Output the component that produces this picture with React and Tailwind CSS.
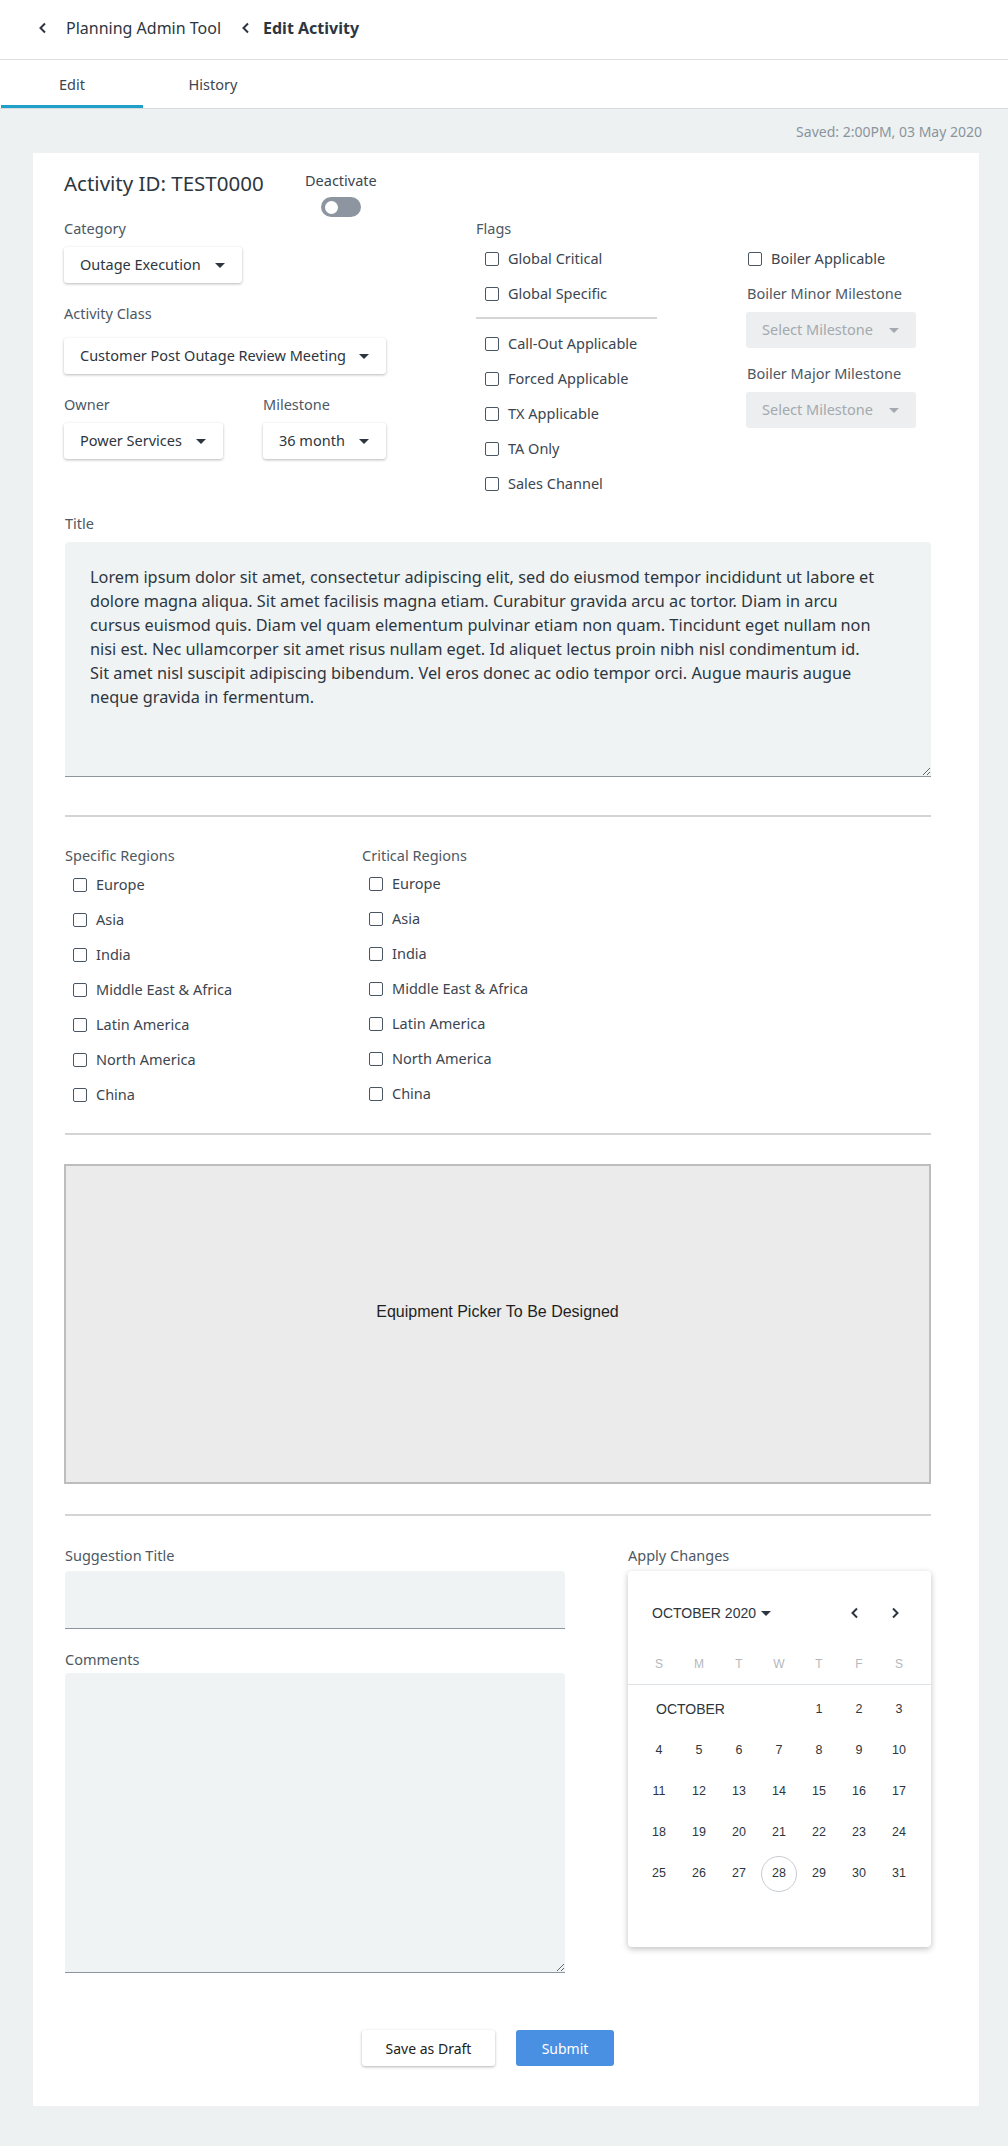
import React from 'react';

const font = { fontFamily: '"Noto Sans", "Open Sans", sans-serif' };

const Caret = ({ className = 'border-t-[#2d3640]' }) => (
  <span className={`inline-block w-0 h-0 border-l-[5px] border-r-[5px] border-t-[5px] border-l-transparent border-r-transparent ${className}`} />
);

const Chevron = ({ dir = 'left', className = '' }) => (
  <svg width="10" height="12" viewBox="0 0 10 12" className={className}>
    {dir === 'left' ? (
      <path d="M7 1.5 L2.5 6 L7 10.5" fill="none" stroke="#2d3640" strokeWidth="2" />
    ) : (
      <path d="M3 1.5 L7.5 6 L3 10.5" fill="none" stroke="#2d3640" strokeWidth="2" />
    )}
  </svg>
);

const Select = ({ value, width }) => (
  <div className={`${width} h-[36px] bg-white rounded-[3px] shadow-[0_1px_3px_rgba(0,0,0,0.28)] flex items-center justify-between pl-4 pr-[17px]`}>
    <span className="text-[14.5px] text-[#2d3640] whitespace-nowrap">{value}</span>
    <Caret />
  </div>
);

const DisabledSelect = () => (
  <div className="w-[170px] h-[36px] bg-[#eceeef] rounded-[3px] flex items-center justify-between pl-4 pr-[17px]">
    <span className="text-[14.5px] text-[#a3a9ae]">Select Milestone</span>
    <Caret className="border-t-[#a3a9ae]" />
  </div>
);

const Checkbox = ({ label }) => (
  <div className="h-[35px] flex items-center gap-[9px]">
    <span className="w-[14px] h-[14px] border-[1.5px] border-[#4b5663] rounded-[2px] bg-white" />
    <span className="text-[14.5px] text-[#3b4550]">{label}</span>
  </div>
);

const Label = ({ children, className = '' }) => (
  <div className={`text-[14.5px] leading-[20px] text-[#4d5863] ${className}`}>{children}</div>
);

const regions = ['Europe', 'Asia', 'India', 'Middle East & Africa', 'Latin America', 'North America', 'China'];

const lorem =
  'Lorem ipsum dolor sit amet, consectetur adipiscing elit, sed do eiusmod tempor incididunt ut labore et dolore magna aliqua. Sit amet facilisis magna etiam. Curabitur gravida arcu ac tortor. Diam in arcu cursus euismod quis. Diam vel quam elementum pulvinar etiam non quam. Tincidunt eget nullam non nisi est. Nec ullamcorper sit amet risus nullam eget. Id aliquet lectus proin nibh nisl condimentum id. Sit amet nisl suscipit adipiscing bibendum. Vel eros donec ac odio tempor orci. Augue mauris augue neque gravida in fermentum.';

const Calendar = () => {
  const weeks = [
    [null, null, null, null, 1, 2, 3],
    [4, 5, 6, 7, 8, 9, 10],
    [11, 12, 13, 14, 15, 16, 17],
    [18, 19, 20, 21, 22, 23, 24],
    [25, 26, 27, 28, 29, 30, 31],
  ];
  return (
    <div
      className="w-[303px] h-[376px] bg-white rounded-[4px] shadow-[0_2px_6px_rgba(0,0,0,0.25)]"
      style={{ fontFamily: '"Liberation Sans", Arial, sans-serif' }}
    >
      <div className="h-[84px] flex items-center pl-[24px] pr-[31px]">
        <span className="text-[14px] text-[#2d3640]">OCTOBER 2020</span>
        <Caret className="border-t-[#2d3640] ml-[5px]" />
        <div className="flex-1" />
        <Chevron dir="left" className="mr-[30px]" />
        <Chevron dir="right" />
      </div>
      <div className="grid grid-cols-7 w-[280px] ml-[11px] h-[29px] items-start">
        {['S', 'M', 'T', 'W', 'T', 'F', 'S'].map((d, i) => (
          <div key={i} className="text-center text-[12px] leading-[18px] text-[#b3b8bd]">{d}</div>
        ))}
      </div>
      <div className="h-px bg-[#dde2e6]" />
      <div className="ml-[11px] w-[280px] mt-[4px]">
        {weeks.map((w, wi) => (
          <div key={wi} className="grid grid-cols-7 h-[41px] items-center">
            {wi === 0 && (
              <div className="col-span-4 text-[14px] text-[#2d3640] pl-[17px]">OCTOBER</div>
            )}
            {w.map((d, di) =>
              d === null ? null : (
                <div key={di} className="flex justify-center">
                  <span
                    className={`w-[36px] h-[36px] flex items-center justify-center text-[12.5px] text-[#2d3640] rounded-full ${
                      d === 28 ? 'border border-[#c8ccd0]' : ''
                    }`}
                  >
                    {d}
                  </span>
                </div>
              )
            )}
          </div>
        ))}
      </div>
    </div>
  );
};

export default function App() {
  return (
    <div className="w-[1008px] min-h-[2146px] bg-[#edf1f2] text-[#2d3640]" style={font}>
      {/* header */}
      <div className="h-[60px] bg-white border-b-[1.5px] border-[#dcdfe2] flex items-center pl-[38px] pb-[4px]">
        <Chevron dir="left" />
        <span className="ml-[18px] text-[16px] text-[#2d3640]">Planning Admin Tool</span>
        <Chevron dir="left" className="ml-[20px]" />
        <span className="ml-[12px] text-[16px] font-bold text-[#2d3640]">Edit Activity</span>
      </div>
      {/* tabs */}
      <div className="h-[49px] bg-white border-b border-[#d9dcdf] flex">
        <div className="w-[142px] ml-[1px] flex items-center justify-center text-[14.5px] text-[#3b4550] border-b-[3px] border-[#1fa0c8] pt-[4px]">
          Edit
        </div>
        <div className="w-[140px] flex items-center justify-center text-[14.5px] text-[#3b4550] pt-[1px]">History</div>
      </div>

      <div className="pb-[40px]">
        <div className="h-[44px] flex items-center justify-end pr-[26px] text-[14px] text-[#8b949c]">
          Saved: 2:00PM, 03 May 2020
        </div>
        <div className="ml-[33px] w-[946px] bg-white pt-[18px] pl-[31px] pr-[48px] pb-[40px]">
          {/* top row */}
          <div className="h-[47px] flex items-start">
            <h1 className="w-[241px] text-[20.5px] leading-[28px] text-[#2d3640] -mt-[2px]">Activity ID: TEST0000</h1>
            <div className="flex flex-col items-center">
              <div className="text-[14.5px] leading-[20px] text-[#3b4550] -mt-[1px]">Deactivate</div>
              <div className="mt-[7px] w-[40px] h-[20px] rounded-full bg-[#8d96a0] flex items-center pl-[4px]">
                <span className="w-[13px] h-[13px] rounded-full bg-white" />
              </div>
            </div>
          </div>

          <div className="flex">
            <div className="w-[412px]">
              <Label>Category</Label>
              <div className="mt-[9px]">
                <Select value="Outage Execution" width="w-[178px]" />
              </div>
              <Label className="mt-[20px]">Activity Class</Label>
              <div className="mt-[15px]">
                <Select value="Customer Post Outage Review Meeting" width="w-[322px]" />
              </div>
              <div className="flex mt-[20px]">
                <div className="w-[199px]">
                  <Label>Owner</Label>
                  <div className="mt-[9px]">
                    <Select value="Power Services" width="w-[159px]" />
                  </div>
                </div>
                <div>
                  <Label>Milestone</Label>
                  <div className="mt-[9px]">
                    <Select value="36 month" width="w-[123px]" />
                  </div>
                </div>
              </div>
            </div>

            <div className="w-[270px]">
              <Label>Flags</Label>
              <div className="mt-[3px] pl-[9px]">
                <Checkbox label="Global Critical" />
                <Checkbox label="Global Specific" />
              </div>
              <div className="mt-[6px] w-[181px] h-[2px] bg-[#d3d5d7]" />
              <div className="mt-[7px] pl-[9px]">
                {['Call-Out Applicable', 'Forced Applicable', 'TX Applicable', 'TA Only', 'Sales Channel'].map((f) => (
                  <Checkbox key={f} label={f} />
                ))}
              </div>
            </div>

            <div>
              <div className="mt-[23px] pl-[2px]">
                <Checkbox label="Boiler Applicable" />
              </div>
              <Label className="mt-[7px] pl-[1px]">Boiler Minor Milestone</Label>
              <div className="mt-[9px]">
                <DisabledSelect />
              </div>
              <Label className="mt-[15px] pl-[1px]">Boiler Major Milestone</Label>
              <div className="mt-[9px]">
                <DisabledSelect />
              </div>
            </div>
          </div>

          {/* title */}
          <Label className="mt-[12px] pl-[1px]">Title</Label>
          <textarea
            readOnly
            value={lorem}
            className="mt-[9px] ml-[1px] block w-[866px] h-[235px] bg-[#f0f3f4] rounded-t-[4px] border-b border-[#8d959e] pl-[25px] pr-[54px] pt-[23px] text-[16.3px] leading-[24px] text-[#2d3640] outline-none resize-y"
          />

          <div className="mt-[38px] ml-[1px] h-[2px] bg-[#d4d4d4]" />

          {/* regions */}
          <div className="flex mt-[28px] ml-[1px]">
            <div className="w-[297px]">
              <Label>Specific Regions</Label>
              <div className="mt-[2px] pl-[8px]">
                {regions.map((r) => (
                  <Checkbox key={r} label={r} />
                ))}
              </div>
            </div>
            <div>
              <Label>Critical Regions</Label>
              <div className="mt-[1px] pl-[7px]">
                {regions.map((r) => (
                  <Checkbox key={r} label={r} />
                ))}
              </div>
            </div>
          </div>

          <div className="mt-[21px] ml-[1px] h-[2px] bg-[#d4d4d4]" />

          {/* equipment picker */}
          <div
            className="mt-[29px] h-[320px] bg-[#ebebeb] border-2 border-[#bdbdbd] flex items-center justify-center pb-[24px] text-[16px] text-[#1f1f1f]"
            style={{ fontFamily: '"Liberation Sans", Arial, sans-serif' }}
          >
            Equipment Picker To Be Designed
          </div>

          <div className="mt-[30px] ml-[1px] h-[2px] bg-[#d4d4d4]" />

          {/* suggestion + calendar */}
          <div className="flex mt-[29px] ml-[1px]">
            <div className="w-[500px]">
              <Label>Suggestion Title</Label>
              <div className="mt-[6px] h-[58px] bg-[#f0f3f4] rounded-t-[4px] border-b border-[#8d959e]" />
              <Label className="mt-[20px]">Comments</Label>
              <textarea
                readOnly
                className="mt-[4px] block w-[500px] h-[300px] bg-[#f0f3f4] rounded-t-[4px] border-b border-[#8d959e] outline-none"
              />
            </div>
            <div className="ml-[63px]">
              <Label>Apply Changes</Label>
              <div className="mt-[6px]">
                <Calendar />
              </div>
            </div>
          </div>

          {/* actions */}
          <div className="flex mt-[57px] ml-[298px] gap-[21px]">
            <button className="w-[133px] h-[36px] bg-white rounded-[3px] shadow-[0_1px_3px_rgba(0,0,0,0.3)] text-[14px] text-[#222]">
              Save as Draft
            </button>
            <button className="w-[98px] h-[36px] bg-[#4a90e2] rounded-[3px] text-[14px] text-white">Submit</button>
          </div>
        </div>
      </div>
    </div>
  );
}
